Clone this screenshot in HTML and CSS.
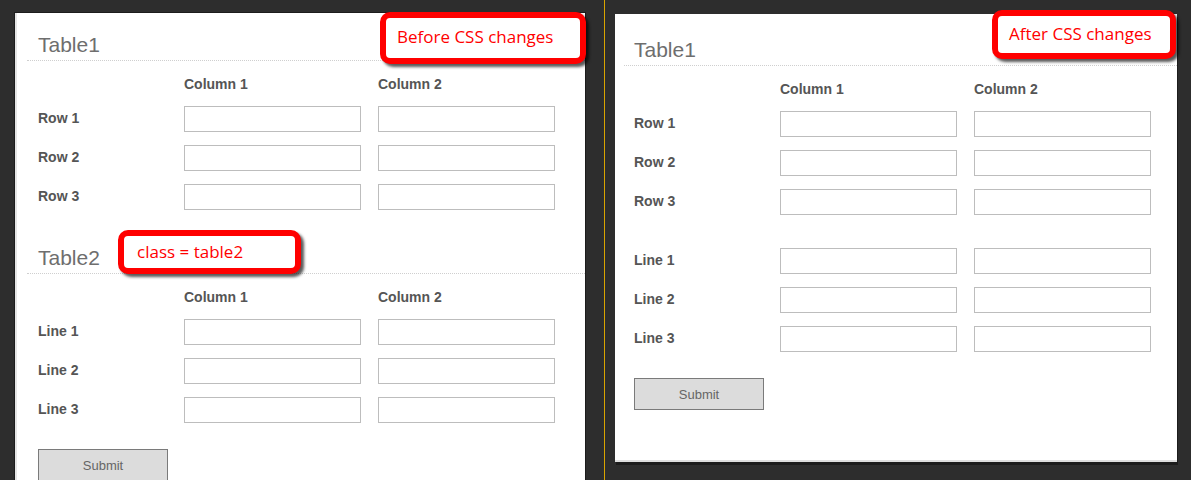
FILE: index.html
```html
<!DOCTYPE html>
<html lang="en">
<head>
    <meta charset="UTF-8">
    <meta name="viewport" content="width=device-width, initial-scale=1.0">
    <title>Before / After CSS changes</title>
    <link rel="stylesheet" href="styles.css">
</head>
<body>
    <div class="panel before">
        <div class="section">
            <h2 class="section-title">Table1</h2>
            <div class="grid">
                <div></div>
                <div class="col-head">Column 1</div>
                <div class="col-head">Column 2</div>
                <div class="row-label">Row 1</div>
                <input class="field" type="text">
                <input class="field" type="text">
                <div class="row-label">Row 2</div>
                <input class="field" type="text">
                <input class="field" type="text">
                <div class="row-label">Row 3</div>
                <input class="field" type="text">
                <input class="field" type="text">
            </div>
        </div>
        <div class="section table2">
            <h2 class="section-title">Table2</h2>
            <div class="grid">
                <div></div>
                <div class="col-head">Column 1</div>
                <div class="col-head">Column 2</div>
                <div class="row-label">Line 1</div>
                <input class="field" type="text">
                <input class="field" type="text">
                <div class="row-label">Line 2</div>
                <input class="field" type="text">
                <input class="field" type="text">
                <div class="row-label">Line 3</div>
                <input class="field" type="text">
                <input class="field" type="text">
            </div>
        </div>
        <button class="submit">Submit</button>
    </div>

    <div class="split"></div>

    <div class="panel after">
        <div class="section">
            <h2 class="section-title">Table1</h2>
            <div class="grid">
                <div></div>
                <div class="col-head">Column 1</div>
                <div class="col-head">Column 2</div>
                <div class="row-label">Row 1</div>
                <input class="field" type="text">
                <input class="field" type="text">
                <div class="row-label">Row 2</div>
                <input class="field" type="text">
                <input class="field" type="text">
                <div class="row-label">Row 3</div>
                <input class="field" type="text">
                <input class="field" type="text">
            </div>
        </div>
        <div class="section table2">
            <div class="grid">
                <div class="row-label">Line 1</div>
                <input class="field" type="text">
                <input class="field" type="text">
                <div class="row-label">Line 2</div>
                <input class="field" type="text">
                <input class="field" type="text">
                <div class="row-label">Line 3</div>
                <input class="field" type="text">
                <input class="field" type="text">
            </div>
        </div>
        <button class="submit">Submit</button>
    </div>

    <div class="callout callout-before">Before CSS changes</div>
    <div class="callout callout-class">class = table2</div>
    <div class="callout callout-after">After CSS changes</div>
</body>
</html>
```

FILE: styles.css
```css
body {
    margin: 0;
    height: 480px;
    overflow: hidden;
    display: flex;
    align-items: flex-start;
    background: #2d2d2d;
    font-family: "Liberation Sans", Arial, sans-serif;
    position: relative;
}

.panel {
    background: #fff;
    box-sizing: border-box;
}

.panel.before {
    margin: 13px 0 0 15px;
    width: 570px;
    height: 500px;
    padding: 20px 0 0 10px;
    border-left: 2px solid #e6e6e6;
    box-shadow: 0 0 0 1px #1c1c1c;
}

.panel.after {
    margin: 14px 0 0 10px;
    width: 562px;
    height: 448px;
    padding: 24px 0 0 9px;
    border-bottom: 2px solid #dedede;
    box-shadow: 1px 3px 0 #1c1c1c;
}

.split {
    width: 1px;
    height: 480px;
    margin-left: 19px;
    background: #d9a400;
}

.section-title {
    margin: 0;
    padding: 0 0 3px 11px;
    font-size: 21px;
    line-height: 24px;
    font-weight: normal;
    color: #6e6e6e;
    border-bottom: 1px dotted #cfcfcf;
}

.after .section-title {
    padding-left: 10px;
}

.grid {
    display: grid;
    grid-template-columns: 129px 177px 177px;
    column-gap: 17px;
    row-gap: 13px;
    align-items: center;
    padding: 15px 0 0 11px;
}

.after .grid {
    padding-left: 10px;
}

.col-head {
    font-size: 14px;
    line-height: 17px;
    font-weight: bold;
    color: #555;
}

.row-label {
    font-size: 14px;
    font-weight: bold;
    color: #555;
    padding-bottom: 3px;
}

.field {
    box-sizing: border-box;
    width: 177px;
    height: 26px;
    margin: 0;
    border: 1px solid #bdbdbd;
    background: #fff;
}

.before .table2 {
    margin-top: 36px;
}

.after .table2 .grid {
    padding-top: 33px;
}

.submit {
    display: block;
    margin: 26px 0 0 11px;
    width: 130px;
    height: 32px;
    background: #dcdcdc;
    border: 1px solid #7a7a7a;
    font-family: "Liberation Sans", Arial, sans-serif;
    font-size: 13px;
    color: #666;
}

.after .submit {
    margin-left: 10px;
}

.callout {
    position: absolute;
    box-sizing: border-box;
    display: flex;
    align-items: center;
    background: #fff;
    border: 6px solid #f00;
    border-radius: 10px;
    box-shadow: 3px 3px 3px rgba(0, 0, 0, 0.65);
    font-family: "Open Sans", "Liberation Sans", sans-serif;
    font-size: 17px;
    color: #f00;
    white-space: nowrap;
}

.callout-before {
    left: 380px;
    top: 12px;
    width: 206px;
    height: 52px;
    padding: 0 0 3px 11px;
}

.callout-class {
    left: 118px;
    top: 230px;
    width: 183px;
    height: 44px;
    padding: 0 0 2px 13px;
}

.callout-after {
    left: 992px;
    top: 10px;
    width: 184px;
    height: 49px;
    padding: 0 0 2px 11px;
}
```
